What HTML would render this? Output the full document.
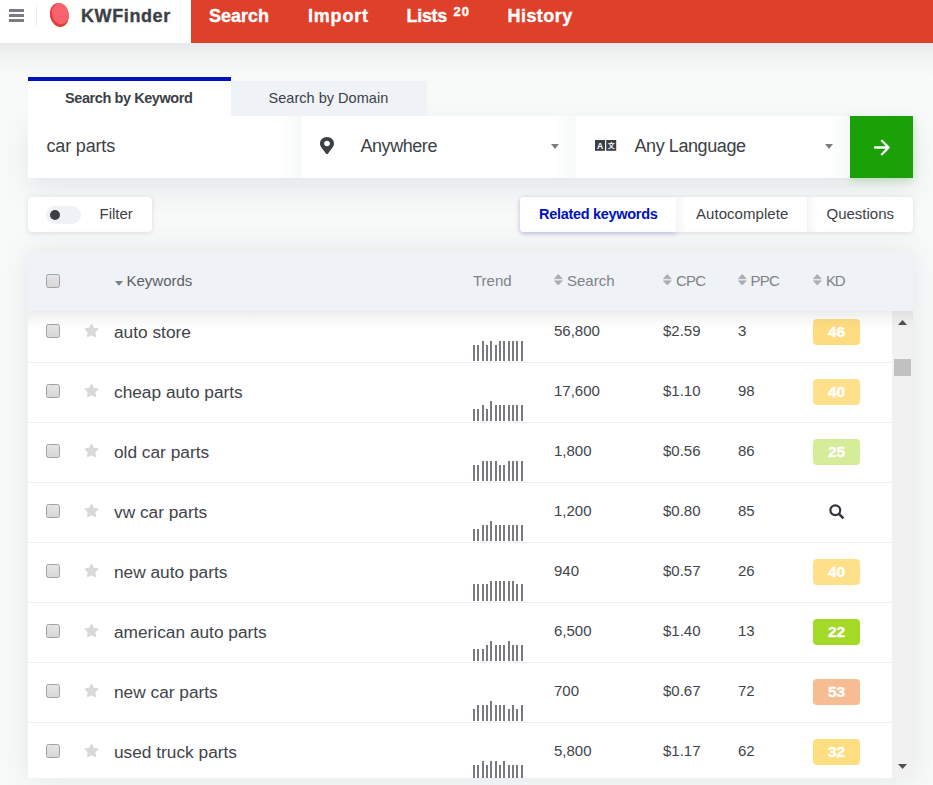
<!DOCTYPE html>
<html lang="en">
<head>
<meta charset="utf-8">
<title>KWFinder</title>
<style>
*{box-sizing:border-box;margin:0;padding:0}
html,body{width:933px;height:785px;overflow:hidden}
body{position:relative;background:#f8fafa;font-family:"Liberation Sans",sans-serif;color:#3c3f46}
.abs{position:absolute}
.t{position:absolute;white-space:nowrap;line-height:20px}
/* header */
#hdr{left:0;top:0;width:933px;height:43px;background:#df402a}
#logo{left:0;top:0;width:191px;height:43px;background:#fff}
#hshadow{left:0;top:43px;width:933px;height:34px;background:linear-gradient(#e6e8e9,#f3f5f5 45%,#f8fafa)}
.nav{color:#fff;font-weight:bold;font-size:18px;top:5.6px;-webkit-text-stroke:.35px #fff}
/* search */
#tab1{left:28px;top:77px;width:203px;height:39px;background:#fff;border-top:4px solid #0012bf}
#tab2{left:231px;top:81px;width:196px;height:35px;background:#eff3f7}
#srow{left:28px;top:116px;width:885px;height:62px;background:#fff;box-shadow:0 12px 28px rgba(60,70,80,.10)}
#go{left:850px;top:116px;width:63px;height:62px;background:#1ca008;box-shadow:0 3px 8px rgba(28,160,8,.22)}
.big{font-size:18px;top:136px}
/* filter + tabs */
#filter{left:28px;top:197px;width:124px;height:35px;background:#fff;border-radius:4px;box-shadow:0 1px 5px rgba(60,70,80,.16)}
#tabs{left:520px;top:197px;width:393px;height:35px;background:#fff;border-radius:4px;box-shadow:0 1px 5px rgba(60,70,80,.16)}
/* table */
#tbl{left:28px;top:251px;width:885px;height:527px;background:#fff;box-shadow:0 0 26px rgba(60,70,80,.115)}
#thead{left:28px;top:251px;width:885px;height:60px;background:#eff2f6}
#thsh{left:28px;top:311px;width:885px;height:19px;background:linear-gradient(rgba(40,45,50,.085),rgba(40,45,50,.03) 50%,rgba(40,45,50,0))}
.th{font-size:15px;top:271px;color:#808287}
.row{position:absolute;left:28px;width:864px;height:60px;border-bottom:1px solid #ecf0f3}
.kw{font-size:17.3px;color:#41444b}
.num{font-size:15px;color:#41444b}
.cb{position:absolute;width:14px;height:14px;border:1px solid #a2a2a2;border-radius:2.5px;background:linear-gradient(#e5e5e5,#d7d7d7)}
.star{position:absolute;left:56px;top:21px;width:15px;height:13px;fill:#d9d9d9}
.mag{position:absolute;left:801px;top:20.5px;width:16px;height:16px}
.trend{position:absolute;left:445px;top:38px;width:52px;height:20px;fill:#787a7f;shape-rendering:crispEdges}
.kd{position:absolute;left:785px;width:47px;height:26px;border-radius:4px;color:#fff;font-weight:bold;font-size:15.5px;text-align:center;line-height:26px;-webkit-text-stroke:.35px #fff}
</style>
</head>
<body>
<div class="abs" id="hshadow"></div>
<div class="abs" id="hdr"></div>
<div class="abs" id="logo"></div>
<div class="abs" style="left:9px;top:9.200px;width:15px;height:2.500px;background:#7a7c81"></div>
<div class="abs" style="left:9px;top:14.100px;width:15px;height:2.500px;background:#7a7c81"></div>
<div class="abs" style="left:9px;top:19.100px;width:15px;height:2.500px;background:#7a7c81"></div>
<div class="abs" style="left:36px;top:5px;width:1px;height:21px;background:#e9ecf0"></div>
<svg class="abs" style="left:47px;top:1px" width="26" height="28" viewBox="0 0 26 28"><ellipse cx="12.3" cy="14" rx="9.4" ry="12" transform="rotate(-12 12.3 14)" fill="#e04038"/><ellipse cx="13.3" cy="12.6" rx="8.300" ry="10.600" transform="rotate(-12 13.3 12.6)" fill="#f9616c"/></svg>
<div class="t nav" style="left:209px">Search</div>
<div class="t nav" style="left:308px;letter-spacing:.8px">Import</div>
<div class="t nav" style="left:406.5px;letter-spacing:-.3px">Lists</div>
<div class="t nav" style="left:453.5px;font-size:13px;top:2px;letter-spacing:1.1px">20</div>
<div class="t nav" style="left:507.5px;letter-spacing:.45px">History</div>
<div class="t" id="brand" style="left:81px;top:6px;font-size:18px;font-weight:bold;color:#3c3f46;letter-spacing:.6px;-webkit-text-stroke:.35px #3c3f46">KWFinder</div>

<div class="abs" id="srow"></div>
<div class="abs" id="tab1"></div>
<div class="abs" id="tab2"></div>
<div class="abs" id="go"></div>
<div class="abs" style="left:278px;top:116px;width:24px;height:62px;background:linear-gradient(90deg,rgba(248,249,250,0),#f7f9fa)"></div>
<div class="abs" style="left:552px;top:116px;width:24px;height:62px;background:linear-gradient(90deg,rgba(248,249,250,0),#f7f9fa)"></div>
<div class="abs" style="left:826px;top:116px;width:24px;height:62px;background:linear-gradient(90deg,rgba(248,249,250,0),#f7f9fa)"></div>
<svg class="abs" style="left:320px;top:137px" width="14" height="17.300" preserveAspectRatio="none" viewBox="0 0 384 512"><path fill="#3c3f46" d="M172.268 501.670C26.970 291.031 0 269.413 0 192 0 85.961 85.961 0 192 0s192 85.961 192 192c0 77.413-26.970 99.031-172.268 309.670-9.535 13.774-29.930 13.773-39.464 0zM192 272c44.183 0 80-35.817 80-80s-35.817-80-80-80-80 35.817-80 80 35.817 80 80 80z"/></svg>
<svg class="abs" style="left:550.5px;top:144px" width="8" height="5" viewBox="0 0 8 5"><path d="M0 0h8L4 5z" fill="#7d7d7d"/></svg>
<svg class="abs" style="left:824.5px;top:144px" width="8" height="5" viewBox="0 0 8 5"><path d="M0 0h8L4 5z" fill="#7d7d7d"/></svg>
<svg class="abs" style="left:595px;top:140px" width="22" height="11" viewBox="0 0 22 11"><rect x="0" y="0" width="10" height="10.8" fill="#3c3f46"/><rect x="11.2" y="0" width="10" height="10.8" fill="#3c3f46"/><text x="5" y="8.6" text-anchor="middle" font-family="Liberation Sans, sans-serif" font-weight="bold" font-size="8.5" fill="#fff">A</text><text x="16.2" y="8.2" text-anchor="middle" font-family="Noto Sans CJK SC, sans-serif" font-weight="bold" font-size="7" fill="#fff">文</text></svg>
<svg class="abs" style="left:873px;top:139px" width="17" height="17" viewBox="0 0 17 17"><path d="M2 8.5H15M9 1.8L15.6 8.5L9 15.2" fill="none" stroke="#fff" stroke-width="2.3" stroke-linecap="round" stroke-linejoin="round"/></svg>
<div class="t" style="left:65px;top:88px;font-size:14.5px;font-weight:bold;letter-spacing:-.42px">Search by Keyword</div>
<div class="t" style="left:268.500px;top:88px;font-size:14.5px;letter-spacing:.03px">Search by Domain</div>
<div class="t big" style="left:46.500px;letter-spacing:-.17px">car parts</div>
<div class="t big" style="left:360.500px;letter-spacing:-.45px">Anywhere</div>
<div class="t big" style="left:634.500px;letter-spacing:-.42px">Any Language</div>

<div class="abs" id="filter"></div>
<div class="abs" style="left:46px;top:206px;width:35px;height:18px;border-radius:9px;background:#eef1f5"></div>
<div class="abs" style="left:50px;top:210px;width:10px;height:10px;border-radius:50%;background:#3c3f46"></div>
<div class="t" style="left:99.500px;top:204px;font-size:15px">Filter</div>
<div class="abs" id="tabs"></div>
<div class="abs" style="left:520px;top:197px;width:156px;height:35px;background:#fff;border-radius:4px 0 0 4px;box-shadow:0 2px 5px rgba(0,18,191,.16)"></div>
<div class="abs" style="left:676px;top:197px;width:10px;height:35px;background:linear-gradient(90deg,#eceff3,#fff 12%,#f6f7f9 13%,#fff)"></div>
<div class="abs" style="left:807px;top:197px;width:10px;height:35px;background:linear-gradient(90deg,#eceff3,#fff 12%,#f6f7f9 13%,#fff)"></div>
<div class="t" style="left:539px;top:204px;font-size:14.5px;font-weight:bold;color:#0012bf;letter-spacing:-.3px">Related keywords</div>
<div class="t" style="left:696px;top:204px;font-size:15px;letter-spacing:.05px">Autocomplete</div>
<div class="t" style="left:826.500px;top:204px;font-size:15px">Questions</div>

<div class="abs" id="tbl"></div>
<div class="abs" id="rows" style="left:0;top:311px;width:933px;height:467px;overflow:hidden">
<div class="row" style="top:-8px"><span class="cb" style="left:18px;top:21px"></span><svg class="star" viewBox="0 0 576 512"><path d="M259.3 17.8L194 150.2 47.900 171.500c-26.200 3.800-36.700 36.100-17.700 54.600l105.700 103-25 145.500c-4.500 26.300 23.200 46 46.400 33.700L288 439.600l130.700 68.700c23.200 12.200 50.900-7.400 46.400-33.700l-25-145.500 105.700-103c19-18.500 8.500-50.800-17.700-54.600L382 150.200 316.700 17.800c-11.700-23.600-45.600-23.900-57.400 0z"/></svg><span class="t kw" style="left:86px;top:18.6px">auto store</span><svg class="trend" viewBox="0 0 52 20"><rect x="0" y="4" width="2" height="16"/><rect x="4" y="4" width="2" height="16"/><rect x="9" y="0" width="2" height="20"/><rect x="13" y="4" width="2" height="16"/><rect x="17" y="0" width="2" height="20"/><rect x="22" y="4" width="2" height="16"/><rect x="26" y="0" width="2" height="20"/><rect x="30" y="0" width="2" height="20"/><rect x="35" y="0" width="2" height="20"/><rect x="39" y="0" width="2" height="20"/><rect x="43" y="0" width="2" height="20"/><rect x="48" y="0" width="2" height="20"/></svg><span class="t num" style="left:526px;top:17.5px">56,800</span><span class="t num" style="left:635px;top:17.5px">$2.59</span><span class="t num" style="left:710px;top:17.5px">3</span><span class="kd" style="top:16px;background:#ffdc80">46</span></div>
<div class="row" style="top:52px"><span class="cb" style="left:18px;top:21px"></span><svg class="star" viewBox="0 0 576 512"><path d="M259.3 17.8L194 150.2 47.900 171.500c-26.200 3.800-36.700 36.100-17.700 54.600l105.700 103-25 145.500c-4.500 26.300 23.200 46 46.400 33.700L288 439.600l130.700 68.700c23.200 12.200 50.900-7.400 46.400-33.700l-25-145.500 105.700-103c19-18.500 8.500-50.800-17.700-54.600L382 150.200 316.700 17.800c-11.700-23.600-45.600-23.900-57.400 0z"/></svg><span class="t kw" style="left:86px;top:18.6px">cheap auto parts</span><svg class="trend" viewBox="0 0 52 20"><rect x="0" y="8" width="2" height="12"/><rect x="4" y="8" width="2" height="12"/><rect x="9" y="4" width="2" height="16"/><rect x="13" y="8" width="2" height="12"/><rect x="17" y="0" width="2" height="20"/><rect x="22" y="4" width="2" height="16"/><rect x="26" y="4" width="2" height="16"/><rect x="30" y="4" width="2" height="16"/><rect x="35" y="4" width="2" height="16"/><rect x="39" y="4" width="2" height="16"/><rect x="43" y="4" width="2" height="16"/><rect x="48" y="4" width="2" height="16"/></svg><span class="t num" style="left:526px;top:17.5px">17,600</span><span class="t num" style="left:635px;top:17.5px">$1.10</span><span class="t num" style="left:710px;top:17.5px">98</span><span class="kd" style="top:16px;background:#ffe08a">40</span></div>
<div class="row" style="top:112px"><span class="cb" style="left:18px;top:21px"></span><svg class="star" viewBox="0 0 576 512"><path d="M259.3 17.8L194 150.2 47.900 171.500c-26.200 3.800-36.700 36.100-17.700 54.600l105.700 103-25 145.500c-4.500 26.300 23.200 46 46.400 33.700L288 439.600l130.700 68.700c23.200 12.200 50.900-7.400 46.400-33.700l-25-145.500 105.700-103c19-18.500 8.500-50.800-17.700-54.600L382 150.200 316.700 17.800c-11.700-23.600-45.600-23.900-57.400 0z"/></svg><span class="t kw" style="left:86px;top:18.6px">old car parts</span><svg class="trend" viewBox="0 0 52 20"><rect x="0" y="4" width="2" height="16"/><rect x="4" y="4" width="2" height="16"/><rect x="9" y="0" width="2" height="20"/><rect x="13" y="0" width="2" height="20"/><rect x="17" y="0" width="2" height="20"/><rect x="22" y="0" width="2" height="20"/><rect x="26" y="4" width="2" height="16"/><rect x="30" y="4" width="2" height="16"/><rect x="35" y="0" width="2" height="20"/><rect x="39" y="0" width="2" height="20"/><rect x="43" y="0" width="2" height="20"/><rect x="48" y="0" width="2" height="20"/></svg><span class="t num" style="left:526px;top:17.5px">1,800</span><span class="t num" style="left:635px;top:17.5px">$0.56</span><span class="t num" style="left:710px;top:17.5px">86</span><span class="kd" style="top:16px;background:#d5ec98">25</span></div>
<div class="row" style="top:172px"><span class="cb" style="left:18px;top:21px"></span><svg class="star" viewBox="0 0 576 512"><path d="M259.3 17.8L194 150.2 47.900 171.500c-26.200 3.800-36.700 36.100-17.700 54.600l105.700 103-25 145.500c-4.500 26.300 23.200 46 46.400 33.700L288 439.600l130.700 68.700c23.200 12.200 50.900-7.400 46.400-33.700l-25-145.500 105.700-103c19-18.500 8.500-50.800-17.700-54.600L382 150.200 316.700 17.800c-11.700-23.600-45.600-23.900-57.400 0z"/></svg><span class="t kw" style="left:86px;top:18.6px">vw car parts</span><svg class="trend" viewBox="0 0 52 20"><rect x="0" y="8" width="2" height="12"/><rect x="4" y="8" width="2" height="12"/><rect x="9" y="4" width="2" height="16"/><rect x="13" y="4" width="2" height="16"/><rect x="17" y="0" width="2" height="20"/><rect x="22" y="4" width="2" height="16"/><rect x="26" y="4" width="2" height="16"/><rect x="30" y="4" width="2" height="16"/><rect x="35" y="4" width="2" height="16"/><rect x="39" y="4" width="2" height="16"/><rect x="43" y="4" width="2" height="16"/><rect x="48" y="4" width="2" height="16"/></svg><span class="t num" style="left:526px;top:17.5px">1,200</span><span class="t num" style="left:635px;top:17.5px">$0.80</span><span class="t num" style="left:710px;top:17.5px">85</span><svg class="mag" viewBox="0 0 16 16"><circle cx="6.3" cy="6.2" r="4.9" fill="none" stroke="#33363c" stroke-width="2.2"/><path d="M9.900 9.800L14.500 14.400" stroke="#33363c" stroke-width="2.6" stroke-linecap="butt"/></svg></div>
<div class="row" style="top:232px"><span class="cb" style="left:18px;top:21px"></span><svg class="star" viewBox="0 0 576 512"><path d="M259.3 17.8L194 150.2 47.900 171.500c-26.200 3.800-36.700 36.100-17.700 54.600l105.700 103-25 145.500c-4.500 26.300 23.200 46 46.400 33.700L288 439.600l130.700 68.700c23.200 12.200 50.900-7.400 46.400-33.700l-25-145.500 105.700-103c19-18.500 8.500-50.800-17.700-54.600L382 150.200 316.700 17.800c-11.700-23.600-45.600-23.900-57.400 0z"/></svg><span class="t kw" style="left:86px;top:18.6px">new auto parts</span><svg class="trend" viewBox="0 0 52 20"><rect x="0" y="3" width="2" height="17"/><rect x="4" y="3" width="2" height="17"/><rect x="9" y="3" width="2" height="17"/><rect x="13" y="3" width="2" height="17"/><rect x="17" y="0" width="2" height="20"/><rect x="22" y="0" width="2" height="20"/><rect x="26" y="0" width="2" height="20"/><rect x="30" y="0" width="2" height="20"/><rect x="35" y="0" width="2" height="20"/><rect x="39" y="0" width="2" height="20"/><rect x="43" y="3" width="2" height="17"/><rect x="48" y="3" width="2" height="17"/></svg><span class="t num" style="left:526px;top:17.5px">940</span><span class="t num" style="left:635px;top:17.5px">$0.57</span><span class="t num" style="left:710px;top:17.5px">26</span><span class="kd" style="top:16px;background:#ffe08a">40</span></div>
<div class="row" style="top:292px"><span class="cb" style="left:18px;top:21px"></span><svg class="star" viewBox="0 0 576 512"><path d="M259.3 17.8L194 150.2 47.900 171.500c-26.200 3.800-36.700 36.100-17.700 54.600l105.700 103-25 145.500c-4.500 26.300 23.200 46 46.400 33.700L288 439.600l130.700 68.700c23.200 12.200 50.900-7.400 46.400-33.700l-25-145.500 105.700-103c19-18.500 8.500-50.800-17.700-54.600L382 150.200 316.700 17.800c-11.700-23.600-45.600-23.900-57.400 0z"/></svg><span class="t kw" style="left:86px;top:18.6px">american auto parts</span><svg class="trend" viewBox="0 0 52 20"><rect x="0" y="8" width="2" height="12"/><rect x="4" y="8" width="2" height="12"/><rect x="9" y="8" width="2" height="12"/><rect x="13" y="4" width="2" height="16"/><rect x="17" y="0" width="2" height="20"/><rect x="22" y="4" width="2" height="16"/><rect x="26" y="4" width="2" height="16"/><rect x="30" y="4" width="2" height="16"/><rect x="35" y="0" width="2" height="20"/><rect x="39" y="4" width="2" height="16"/><rect x="43" y="4" width="2" height="16"/><rect x="48" y="4" width="2" height="16"/></svg><span class="t num" style="left:526px;top:17.5px">6,500</span><span class="t num" style="left:635px;top:17.5px">$1.40</span><span class="t num" style="left:710px;top:17.5px">13</span><span class="kd" style="top:16px;background:#a5d927">22</span></div>
<div class="row" style="top:352px"><span class="cb" style="left:18px;top:21px"></span><svg class="star" viewBox="0 0 576 512"><path d="M259.3 17.8L194 150.2 47.900 171.500c-26.200 3.800-36.700 36.100-17.700 54.600l105.700 103-25 145.500c-4.500 26.300 23.200 46 46.400 33.700L288 439.600l130.700 68.700c23.200 12.200 50.900-7.400 46.400-33.700l-25-145.500 105.700-103c19-18.500 8.500-50.800-17.700-54.600L382 150.200 316.700 17.800c-11.700-23.600-45.600-23.900-57.400 0z"/></svg><span class="t kw" style="left:86px;top:18.6px">new car parts</span><svg class="trend" viewBox="0 0 52 20"><rect x="0" y="8" width="2" height="12"/><rect x="4" y="4" width="2" height="16"/><rect x="9" y="4" width="2" height="16"/><rect x="13" y="4" width="2" height="16"/><rect x="17" y="0" width="2" height="20"/><rect x="22" y="4" width="2" height="16"/><rect x="26" y="4" width="2" height="16"/><rect x="30" y="4" width="2" height="16"/><rect x="35" y="8" width="2" height="12"/><rect x="39" y="4" width="2" height="16"/><rect x="43" y="8" width="2" height="12"/><rect x="48" y="4" width="2" height="16"/></svg><span class="t num" style="left:526px;top:17.5px">700</span><span class="t num" style="left:635px;top:17.5px">$0.67</span><span class="t num" style="left:710px;top:17.5px">72</span><span class="kd" style="top:16px;background:#f7bc92">53</span></div>
<div class="row" style="top:412px"><span class="cb" style="left:18px;top:21px"></span><svg class="star" viewBox="0 0 576 512"><path d="M259.3 17.8L194 150.2 47.900 171.500c-26.200 3.800-36.700 36.100-17.700 54.600l105.700 103-25 145.500c-4.500 26.300 23.200 46 46.400 33.700L288 439.600l130.700 68.700c23.200 12.200 50.900-7.400 46.400-33.700l-25-145.500 105.700-103c19-18.500 8.500-50.800-17.700-54.600L382 150.200 316.700 17.800c-11.700-23.600-45.600-23.900-57.400 0z"/></svg><span class="t kw" style="left:86px;top:18.6px">used truck parts</span><svg class="trend" viewBox="0 0 52 20"><rect x="0" y="4" width="2" height="16"/><rect x="4" y="4" width="2" height="16"/><rect x="9" y="0" width="2" height="20"/><rect x="13" y="4" width="2" height="16"/><rect x="17" y="0" width="2" height="20"/><rect x="22" y="0" width="2" height="20"/><rect x="26" y="4" width="2" height="16"/><rect x="30" y="0" width="2" height="20"/><rect x="35" y="4" width="2" height="16"/><rect x="39" y="4" width="2" height="16"/><rect x="43" y="4" width="2" height="16"/><rect x="48" y="4" width="2" height="16"/></svg><span class="t num" style="left:526px;top:17.5px">5,800</span><span class="t num" style="left:635px;top:17.5px">$1.17</span><span class="t num" style="left:710px;top:17.5px">62</span><span class="kd" style="top:16px;background:#ffdd80">32</span></div>
</div>
<div class="abs" style="left:892px;top:311px;width:21px;height:467px;background:#f1f1f1"></div>
<div class="abs" style="left:894px;top:359px;width:17px;height:17px;background:#c1c1c1"></div>
<svg class="abs" style="left:898px;top:320px" width="9" height="5" viewBox="0 0 9 5"><path d="M0 5h9L4.500 0z" fill="#505050"/></svg>
<svg class="abs" style="left:898px;top:764px" width="9" height="5" viewBox="0 0 9 5"><path d="M0 0h9L4.500 5z" fill="#505050"/></svg>
<div class="abs" id="thsh"></div>
<div class="abs" id="thead"></div>
<span class="cb" style="left:46px;top:274px"></span>
<svg class="abs" style="left:114.5px;top:281px" width="8" height="5" viewBox="0 0 8 5"><path d="M0 0h8L4 4.800z" fill="#7d7f84"/></svg>
<svg class="abs" style="left:554px;top:273.700px" width="8.600" height="11.500" viewBox="0 0 9 12"><path d="M0.300 5L4.500 0.300L8.700 5zM0.300 7L4.500 11.700L8.700 7z" fill="#abadb1" stroke="#abadb1" stroke-width=".6" stroke-linejoin="round"/></svg>
<svg class="abs" style="left:663px;top:273.700px" width="8.600" height="11.500" viewBox="0 0 9 12"><path d="M0.300 5L4.500 0.300L8.700 5zM0.300 7L4.500 11.700L8.700 7z" fill="#abadb1" stroke="#abadb1" stroke-width=".6" stroke-linejoin="round"/></svg>
<svg class="abs" style="left:738px;top:273.700px" width="8.600" height="11.500" viewBox="0 0 9 12"><path d="M0.300 5L4.500 0.300L8.700 5zM0.300 7L4.500 11.700L8.700 7z" fill="#abadb1" stroke="#abadb1" stroke-width=".6" stroke-linejoin="round"/></svg>
<svg class="abs" style="left:813px;top:273.700px" width="8.600" height="11.500" viewBox="0 0 9 12"><path d="M0.300 5L4.500 0.300L8.700 5zM0.300 7L4.500 11.700L8.700 7z" fill="#abadb1" stroke="#abadb1" stroke-width=".6" stroke-linejoin="round"/></svg>
<div class="t th" style="left:126.500px;color:#5c5f66">Keywords</div>
<div class="t th" style="left:473px">Trend</div>
<div class="t th" style="left:567px">Search</div>
<div class="t th" style="left:676px;letter-spacing:-.8px">CPC</div>
<div class="t th" style="left:750.500px;letter-spacing:-.8px">PPC</div>
<div class="t th" style="left:826px;letter-spacing:-1.2px">KD</div>
</body>
</html>
